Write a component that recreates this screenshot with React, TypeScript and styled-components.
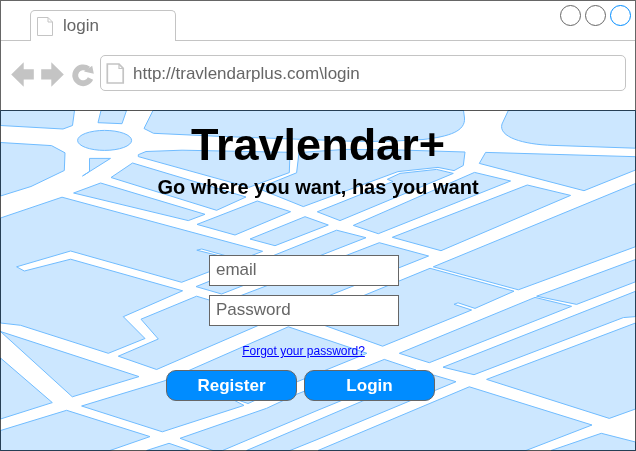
import React from "react";
import styled, { createGlobalStyle } from "styled-components";

const GlobalStyle = createGlobalStyle`
  *, *::before, *::after { box-sizing: border-box; }
  html, body { margin: 0; padding: 0; background: #fff; overflow: hidden; }
  body { font-family: "Liberation Sans", Arial, sans-serif; }
`;

const Browser = styled.div`
  display: flex;
  flex-direction: column;
  width: 636px;
  height: 451px;
  background: #fff;
`;

const TabStrip = styled.header`
  display: flex;
  align-items: flex-end;
  height: 41px;
  border: 1px solid #666;
  border-bottom: 0;
`;

const StripLine = styled.div<{ $width?: number }>`
  flex: ${(p) => (p.$width ? `0 0 ${p.$width}px` : "1")};
  align-self: stretch;
  border-bottom: 1px solid #c4c4c4;
`;

const Tab = styled.div`
  display: flex;
  align-items: center;
  gap: 10px;
  width: 146px;
  height: 31px;
  padding: 0 0 0 6px;
  border: 1px solid #c4c4c4;
  border-bottom: 0;
  border-radius: 5px 5px 0 0;
  font-size: 17px;
  color: #666;
`;

const WindowControls = styled(StripLine)`
  display: flex;
  justify-content: flex-end;
  gap: 4px;
  padding: 4px 4px 0 0;
`;

const WindowDot = styled.span<{ $active?: boolean }>`
  width: 21px;
  height: 21px;
  border: 1px solid ${(p) => (p.$active ? "#008cff" : "#666")};
  border-radius: 50%;
`;

const Toolbar = styled.nav`
  display: flex;
  align-items: flex-start;
  height: 69px;
  padding: 14px 9px 0 10px;
  border: solid #666;
  border-width: 0 1px;
`;

const NavIcons = styled.svg`
  flex: none;
  width: 89px;
  height: 36px;
`;

const AddressBar = styled.div`
  display: flex;
  flex: 1;
  align-items: center;
  gap: 8px;
  height: 36px;
  padding: 0 5px;
  border: 1px solid #c4c4c4;
  border-radius: 5px;
  font-size: 17px;
  color: #666;
`;

const Url = styled.span`
  padding-top: 2px;
`;

const PageIcon = styled.svg`
  flex: none;
  display: block;
`;

const Page = styled.main`
  position: relative;
  flex: 1;
`;

const MapBackdrop = styled.svg`
  position: absolute;
  inset: 0;
  display: block;
`;

const Content = styled.div`
  position: relative;
  display: flex;
  flex-direction: column;
  align-items: center;
  padding-top: 9px;
`;

const Title = styled.h1`
  margin: 0;
  font-size: 45px;
  line-height: 52px;
  color: #000;
`;

const Tagline = styled.p`
  margin: 5px 0 0;
  font-size: 20px;
  font-weight: bold;
  line-height: 23px;
  color: #000;
`;

const Form = styled.form`
  display: flex;
  flex-direction: column;
  align-items: center;
  margin: 56px 0 0 -28px;
`;

const Field = styled.input`
  display: block;
  width: 190px;
  height: 31px;
  margin: 0 0 9px 0;
  padding: 0 6px 2px;
  border: 1px solid #666;
  border-radius: 0;
  background: #fff;
  font: 17px "Liberation Sans", Arial, sans-serif;
  outline: 0;
  &::placeholder { color: #666; opacity: 1; }
`;

const ForgotLink = styled.a`
  margin: 9px 1px 0 0;
  font-size: 12px;
  line-height: 14px;
  color: #0000ff;
  text-decoration: underline;
`;

const Actions = styled.div`
  display: flex;
  gap: 7px;
  margin: 12px 8px 0 0;
`;

const ActionButton = styled.button`
  width: 131px;
  height: 31px;
  padding: 1px 0 0 1px;
  border: 1px solid #666;
  border-radius: 10px;
  background: #008cff;
  color: #fff;
  font: bold 17px "Liberation Sans", Arial, sans-serif;
`;

const blocks = [
  "0.5,125.5 63,129 72.5,125.5 74.5,110.5 0.5,110.5",
  "101,110.5 98,122.7 122,123.7 126.5,110.5",
  "0.5,142.5 51.5,145.6 65,152.8 64.3,170.5 31,186.5 0.5,196",
  "89.5,158.4 110.5,158.4 82.5,176 89.5,171.5",
  "138.3,154.7 146,151.5 182,150.2 290,152.3 289.3,172.6 249,187.3 138.3,156.6",
  "132.5,163 111,177.5 216.6,210.3 246,197",
  "100.6,183 73.6,193 188.3,220.6 205,214.3",
  "0.5,218 62,197.2 262.6,251.3 181.6,282.3 70.6,251 16.6,266.8 24.3,271 70.6,259.2 182.6,290.8 123.3,316.7 145,338.5 108.3,353.3 20.6,325.3 0.5,323",
  "0.5,331.5 139,376.6 72.3,396.8",
  "0.5,358 52.3,402.6 0.5,419",
  "0.5,430.5 66.6,410.3 150,436.6 110,450.5 0.5,450.5",
  "146.6,450.5 169,443.3 190,450.5",
  "81.6,406 164,381 190,370 288.3,326.8 367,353.3 297,381.8 248,403.5 226,396 244,405.4 162.3,431.8",
  "180,438.3 213,450.5 222.6,450.5 316,411 416,370 384.3,359.4 296.6,394.3 266.6,408.3",
  "246.6,450.5 362.6,401 430,374 456,381.7 316,440 290,450.5",
  "469.3,386.8 592,425 526,450.5 318,450.5",
  "601.3,433.3 635.5,442 635.5,450.5 551,450.5",
  "486.6,379.4 609.3,418.4 635.5,409 635.5,323",
  "443,367.2 474,374.7 623.3,317.6 635.5,316.6 635.5,291.3",
  "399.3,353.3 429.3,362.7 571.6,306.3 535,297.4",
  "536.6,296.2 576.6,304.4 635.5,281.8 635.5,259.5",
  "308,319.5 365,295 430,268.3 514,291.2 475,308.4 458,302.8 454,304.3 471.6,310 382.6,346.2",
  "433.3,266.8 518.3,289.8 635.5,246.7 635.5,183.5",
  "527.3,185 570.6,195.4 441,250.7 392.3,237.3",
  "584,190.7 479.3,163.4 485.6,152.4 635.5,156.7 635.5,170",
  "474.5,172.4 510.6,181 378.3,233.7 353.3,225.4",
  "317.3,211.8 340,220.6 453.3,173.4 436.6,169.4 400,173.4 387.3,179.3 393,181.5",
  "299,152.5 345,149.4 400,150 465,152 463.3,165.5 454,170.6 438,167.4 398,171.6 303.3,206.6 258,188.4 296.6,172.8",
  "257.3,201 290.6,211.7 235,235 197,224.4",
  "305,216.7 328.3,225 275,245.7 250,239",
  "336.6,230.2 366,237.7 221.6,294 196,286.6",
  "379.3,242.7 428.6,256 330.6,295 293,311 224,302 347.3,255",
  "196.6,296.2 141,319.2 158.3,339 118.3,356.2 156.6,369.5 257,326 272,319",
];

function NavigationIcons() {
  return (
    <NavIcons viewBox="11 55 89 36" fill="#c4c4c4">
      <path d="M11.2 74.5 23.7 62.3V69.2H33.8V79.5H23.7V86.8Z" />
      <path d="M63.8 74.5 51.3 62.3V69.2H41.2V79.5H51.3V86.8Z" />
      <path d="M88.2 69.1A8 7.9 0 1 0 90.5 78.6" fill="none" stroke="#c4c4c4" strokeWidth="5.8" />
      <path d="M92.2 65.8 93.8 73.7 84 71.4Z" />
    </NavIcons>
  );
}

function StreetMap() {
  return (
    <MapBackdrop width="636" height="341" viewBox="0 110 636 341">
      <rect x="0" y="110" width="636" height="341" fill="#fff" />
      <g fill="#cce7ff" stroke="#70bcff" strokeWidth="1">
        {blocks.map((points) => (
          <polygon key={points} points={points} />
        ))}
        <path d="M153 110.5 144 128.5 153.5 133.3 220 136.4 320 140Q373 143 423 139.5C450 136.5 465.5 131 464.5 118L463.5 110.5Z" />
        <path d="M508.3 110.5 502 124C498 137 523 144.5 553 145.4L635.5 148.2V110.5Z" />
        <ellipse cx="104.6" cy="140.4" rx="27" ry="10" />
        <path d="M220 256 196.8 250.2 201.7 249 225 255.5" fill="#fff" />
      </g>
      <rect x="0.5" y="110.5" width="635" height="340" fill="none" stroke="#555" style={{ mixBlendMode: "multiply" }} />
    </MapBackdrop>
  );
}

export default function App() {
  return (
    <>
      <GlobalStyle />
      <Browser>
        <TabStrip>
          <StripLine $width={29} />
          <Tab>
            <PageIcon width="16" height="19" viewBox="0 0 16 19" fill="none" stroke="#c4c4c4">
              <path d="M.5.5H11L15.5 5V18.5H.5ZM11 .5V5H15.5" />
            </PageIcon>
            login
          </Tab>
          <WindowControls>
            <WindowDot />
            <WindowDot />
            <WindowDot $active />
          </WindowControls>
        </TabStrip>
        <Toolbar>
          <NavigationIcons />
          <AddressBar>
            <PageIcon width="19" height="21" viewBox="0 0 19 21" fill="none" stroke="#c4c4c4">
              <path d="M1.3 1H13L17.2 5.4V20H1.3Z" strokeWidth="1.7" />
              <path d="M13 1V5.5H17" strokeWidth="1.2" />
            </PageIcon>
            <Url>http://travlendarplus.com\login</Url>
          </AddressBar>
        </Toolbar>
        <Page>
          <StreetMap />
          <Content>
            <Title>Travlendar+</Title>
            <Tagline>Go where you want, has you want</Tagline>
            <Form>
              <Field type="text" placeholder="email" />
              <Field type="password" placeholder="Password" />
              <ForgotLink href="#">Forgot your password?</ForgotLink>
              <Actions>
                <ActionButton type="button">Register</ActionButton>
                <ActionButton type="button">Login</ActionButton>
              </Actions>
            </Form>
          </Content>
        </Page>
      </Browser>
    </>
  );
}
